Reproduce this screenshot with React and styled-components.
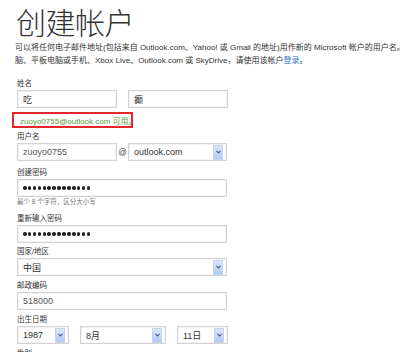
import * as React from 'react'
import styled, { createGlobalStyle } from 'styled-components'

const GlobalStyle = createGlobalStyle`
  html, body {
    margin: 0;
    padding: 0;
    background: #fff;
    overflow: hidden;
  }
  body {
    font-family: 'Liberation Sans', 'Noto Sans CJK SC', sans-serif;
    color: #333;
  }
`

const Page = styled.div`
  width: 404px;
  height: 352px;
  overflow: hidden;
  padding: 3px 0 0 17px;
  box-sizing: border-box;
`

const Title = styled.h1`
  margin: 0 0 0 -1px;
  font-family: 'Noto Sans CJK SC', sans-serif;
  font-weight: 300;
  font-size: 30px;
  line-height: 36px;
  color: #333;
  letter-spacing: -0.5px;
`

const Intro = styled.p`
  margin: 2px 0 0 -2px;
  font-size: 8px;
  line-height: 13px;
  white-space: nowrap;
  color: #333;
  a {
    color: #2f74d0;
    text-decoration: none;
  }
`

const Group = styled.div`
  margin-top: ${p => p.$gap}px;
`

const Label = styled.div`
  font-size: 7.5px;
  line-height: 12px;
  color: #333;
`

const Row = styled.div`
  display: flex;
  align-items: center;
  gap: ${p => p.$gap ?? 11}px;
`

const Field = styled.div`
  box-sizing: border-box;
  width: ${p => p.$w}px;
  height: 18px;
  border: 1px solid #d3d3d3;
  box-shadow: inset 0 0 0 1px #f3f3f3;
  background: #fff;
  display: flex;
  align-items: center;
  padding: 0 3px 0 5px;
  font-size: 9px;
  color: ${p => p.$muted ? '#555' : '#333'};
`

const Value = styled.span`
  flex: 1;
  white-space: nowrap;
  overflow: hidden;
`

const Dots = styled.span`
  flex: 1;
  display: flex;
  gap: 1.3px;
`

const Dot = styled.i`
  width: 3.6px;
  height: 3.6px;
  border-radius: 50%;
  background: #222;
`

const Arrow = styled.span`
  width: 8px;
  height: 13px;
  background: linear-gradient(#dbe6fb, #b3c9f2);
  border: 1px solid #c4d4ef;
  display: flex;
  align-items: center;
  justify-content: center;
  flex: none;
`

const At = styled.span`
  font-size: 8.5px;
  color: #444;
  width: 11px;
  text-align: center;
`

const Notice = styled.div`
  margin: 4px 0 0 -5px;
  width: 121px;
  height: 16px;
  box-sizing: border-box;
  border: 2px solid #e5262b;
  display: flex;
  align-items: center;
  gap: 3px;
  padding-left: 3px;
  font-size: 8px;
  color: #5c9a35;
  white-space: nowrap;
`

const Hint = styled.div`
  font-size: 6.5px;
  line-height: 10px;
  color: #777;
`

const Select = ({ w, children }) => (
  <Field $w={w}>
    <Value>{children}</Value>
    <Arrow>
      <svg width="5" height="4" viewBox="0 0 5 4">
        <path d="M0.5 0.8 L2.5 3 L4.5 0.8" fill="none" stroke="#3d5a8c" strokeWidth="1.1" />
      </svg>
    </Arrow>
  </Field>
)

const Password = ({ length }) => (
  <Field $w={210}>
    <Dots>
      {Array.from({ length }, (_, i) => <Dot key={i} />)}
    </Dots>
  </Field>
)

const Check = () => (
  <svg width="8" height="8" viewBox="0 0 8 8">
    <circle cx="4" cy="4" r="4" fill="#5aa63a" />
    <path d="M2 4.1 L3.4 5.5 L6 2.7" fill="none" stroke="#fff" strokeWidth="1.2" />
  </svg>
)

export default function App() {
  return (
    <Page>
      <GlobalStyle />
      <Title>创建帐户</Title>
      <Intro>
        可以将任何电子邮件地址(包括来自 Outlook.com、Yahoo! 或 Gmail 的地址)用作新的 Microsoft 帐户的用户名。如果你已使用某个电子邮件地址登录到电
        <br />
        脑、平板电脑或手机、Xbox Live、Outlook.com 或 SkyDrive，请使用该帐户<a href="#">登录</a>。
      </Intro>

      <Group $gap={11}>
        <Label>姓名</Label>
        <Row>
          <Field $w={100}><Value>吃</Value></Field>
          <Field $w={100}><Value>癫</Value></Field>
        </Row>
      </Group>

      <Notice>
        <Check />
        zuoyo0755@outlook.com 可用。
      </Notice>

      <Group $gap={3}>
        <Label>用户名</Label>
        <Row $gap={0}>
          <Field $w={100} $muted><Value>zuoyo0755</Value></Field>
          <At>@</At>
          <Select w={99}>outlook.com</Select>
        </Row>
      </Group>

      <Group $gap={6}>
        <Label>创建密码</Label>
        <Password length={14} />
        <Hint>最少 8 个字符，区分大小写</Hint>
      </Group>

      <Group $gap={6}>
        <Label>重新输入密码</Label>
        <Password length={14} />
      </Group>

      <Group $gap={3}>
        <Label>国家/地区</Label>
        <Select w={210}>中国</Select>
      </Group>

      <Group $gap={4}>
        <Label>邮政编码</Label>
        <Field $w={210} $muted><Value>518000</Value></Field>
      </Group>

      <Group $gap={4}>
        <Label>出生日期</Label>
        <Row>
          <Select w={52}>1987</Select>
          <Select w={86}>8月</Select>
          <Select w={51}>11日</Select>
        </Row>
      </Group>

      <Group $gap={4}>
        <Label>性别</Label>
      </Group>
    </Page>
  )
}
